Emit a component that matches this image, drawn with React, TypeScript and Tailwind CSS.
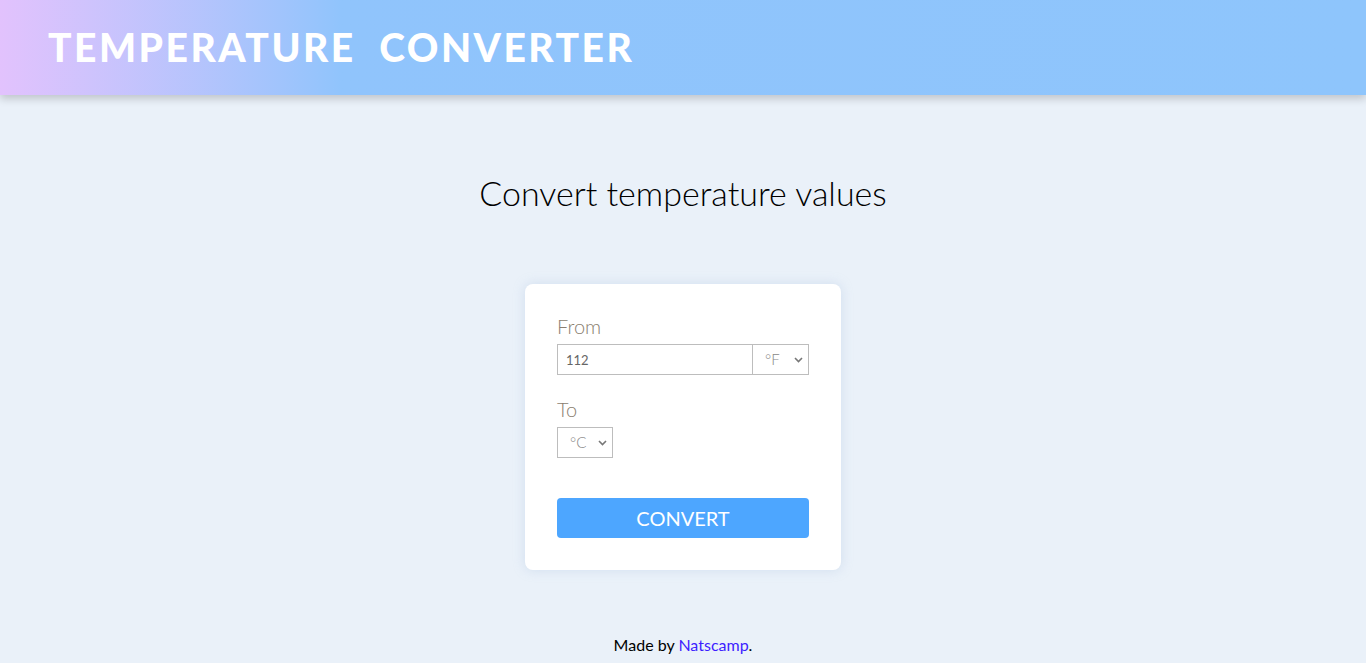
import React, { useState } from 'react';

const Chevron = () => (
  <svg
    className="pointer-events-none absolute right-[6px] top-1/2 -translate-y-1/2"
    width="9"
    height="6"
    viewBox="0 0 9 6"
    fill="none"
    stroke="#777"
    strokeWidth="1.6"
  >
    <path d="M1 1l3.5 3.5L8 1" />
  </svg>
);

const App = () => {
  const [value, setValue] = useState('112');
  const [from, setFrom] = useState('F');
  const [to, setTo] = useState('C');

  return (
    <div className="min-h-screen bg-[#eaf1f9] font-['Lato',sans-serif] flex flex-col">
      <header className="h-[95px] bg-gradient-to-r from-[#e2c2fd] via-[#90c4fc] via-25% to-[#8ec5fc] shadow-[0_4px_8px_rgba(0,0,0,0.18)] flex items-center px-12">
        <h1 className="text-white text-[39px] font-black tracking-[2.5px] leading-none">
          TEMPERATURE&nbsp; CONVERTER
        </h1>
      </header>

      <main className="flex flex-col items-center">
        <h2 className="mt-[81px] text-[34px] font-light text-black leading-none">
          Convert temperature values
        </h2>

        <div className="mt-[74px] w-[316px] bg-white rounded-lg shadow-[0_0_12px_rgba(160,185,220,0.35)] p-8">
          <label className="block text-[20px] text-[#8a7e70] font-light leading-none">From</label>
          <div className="mt-[8px] flex h-[31px]">
            <input
              value={value}
              onChange={(e) => setValue(e.target.value)}
              className="w-[196px] h-full border border-[#bdbdbd] px-2 text-[13px] text-[#666] outline-none"
            />
            <div className="relative w-[56px] h-full">
              <select
                value={from}
                onChange={(e) => setFrom(e.target.value)}
                className="appearance-none w-full h-full border border-l-0 border-[#bdbdbd] pl-[12px] text-[15px] text-[#888] font-light bg-white outline-none"
              >
                <option value="F">°F</option>
                <option value="C">°C</option>
                <option value="K">K</option>
              </select>
              <Chevron />
            </div>
          </div>

          <label className="block mt-[24px] text-[20px] text-[#8a7e70] font-light leading-none">To</label>
          <div className="relative mt-[8px] w-[56px] h-[31px]">
            <select
              value={to}
              onChange={(e) => setTo(e.target.value)}
              className="appearance-none w-full h-full border border-[#bdbdbd] pl-[12px] text-[15px] text-[#888] font-light bg-white outline-none"
            >
              <option value="C">°C</option>
              <option value="F">°F</option>
              <option value="K">K</option>
            </select>
            <Chevron />
          </div>

          <button className="mt-[40px] w-full h-[40px] bg-[#4da6ff] rounded text-white text-[20px] leading-none">
            CONVERT
          </button>
        </div>

        <p className="mt-[63px] text-[16px] text-black">
          Made by <a href="#" className="text-[#3d1dff]">Natscamp</a>.
        </p>
      </main>
    </div>
  );
};

export default App;
